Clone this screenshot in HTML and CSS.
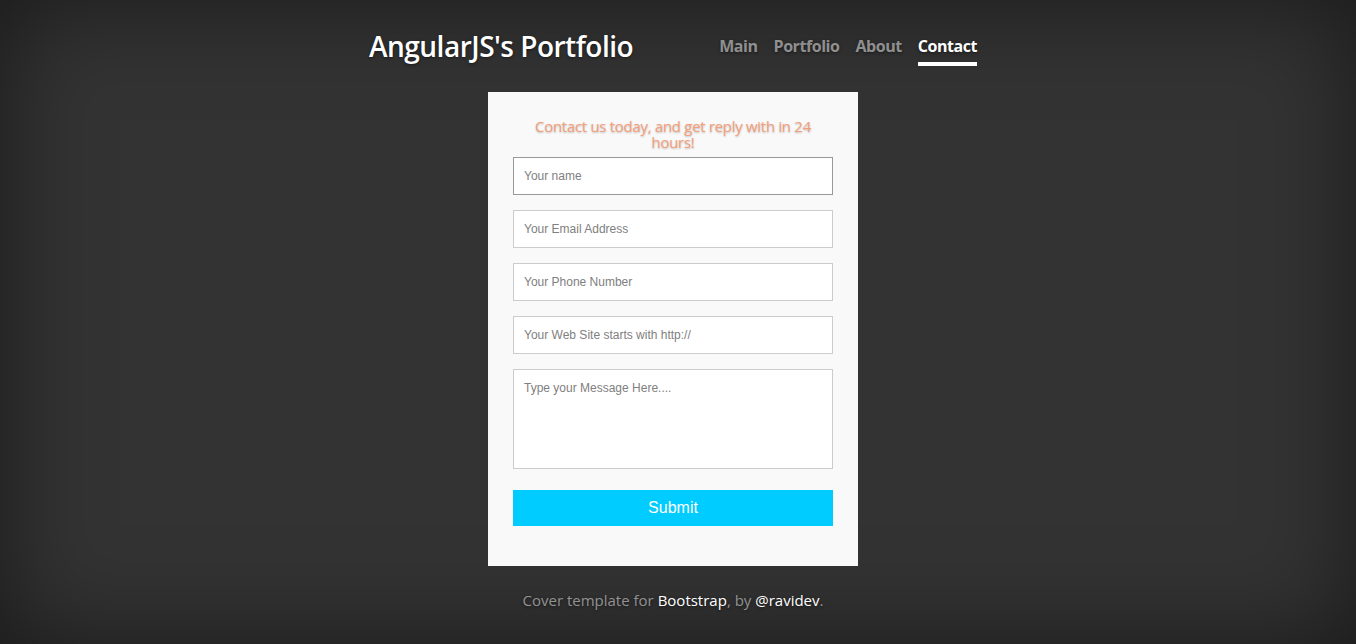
FILE: index.html
```html
<!DOCTYPE html>
<html lang="en">

<head>
    <meta charset="UTF-8">
    <meta name="viewport" content="width=device-width, initial-scale=1.0">
    <title>AngularJS's Portfolio</title>
    <link rel="stylesheet" href="styles.css">
</head>

<body>
    <div class="site-wrapper">
        <div class="cover-container">
            <div class="masthead">
                <h3 class="masthead-brand">AngularJS's Portfolio</h3>
                <ul class="masthead-nav">
                    <li><a href="#">Main</a></li>
                    <li><a href="#">Portfolio</a></li>
                    <li><a href="#">About</a></li>
                    <li class="active"><a href="#">Contact</a></li>
                </ul>
            </div>

            <div class="contact-card">
                <h4 class="contact-title">Contact us today, and get reply with in 24 hours!</h4>
                <form class="contact-form">
                    <input type="text" class="field field-focus" placeholder="Your name">
                    <input type="email" class="field" placeholder="Your Email Address">
                    <input type="tel" class="field" placeholder="Your Phone Number">
                    <input type="url" class="field" placeholder="Your Web Site starts with http://">
                    <textarea class="field field-message" placeholder="Type your Message Here...."></textarea>
                    <button type="button" class="submit">Submit</button>
                </form>
            </div>

            <div class="mastfoot">
                <p>Cover template for <a href="#">Bootstrap</a>, by <a href="#">@ravidev</a>.</p>
            </div>
        </div>
    </div>
</body>

</html>
```

FILE: styles.css
```css
html,
body {
    height: 100%;
}

body {
    margin: 0;
    background-color: #333;
    color: #fff;
    font-family: "Open Sans", "Noto Sans", sans-serif;
    text-shadow: 0 1px 3px rgba(0, 0, 0, 0.5);
    box-shadow: inset 0 0 100px rgba(0, 0, 0, 0.5);
}

a {
    color: #fff;
    text-decoration: none;
}

.site-wrapper {
    display: flex;
    justify-content: center;
    padding-right: 10px;
}

.cover-container {
    width: 608px;
    display: flex;
    flex-direction: column;
    align-items: center;
}

/* header */
.masthead {
    width: 100%;
    display: flex;
    justify-content: space-between;
    align-items: flex-start;
    padding-top: 28px;
    height: 92px;
    box-sizing: border-box;
}

.masthead-brand {
    margin: 0;
    font-size: 28px;
    font-weight: 600;
    line-height: 36px;
    letter-spacing: -0.5px;
}

.masthead-nav {
    list-style: none;
    margin: 0;
    padding: 0;
    display: flex;
    gap: 16px;
    padding-top: 8px;
}

.masthead-nav a {
    display: block;
    font-size: 16px;
    font-weight: 700;
    line-height: 20px;
    color: rgba(255, 255, 255, 0.5);
    border-bottom: 4px solid transparent;
    padding-bottom: 6px;
    letter-spacing: -0.45px;
}

.masthead-nav .active a {
    color: #fff;
    border-bottom-color: #fff;
}

/* contact form */
.contact-card {
    width: 370px;
    box-sizing: border-box;
    background-color: #f9f9f9;
    padding: 26px 25px 40px;
    text-shadow: none;
}

.contact-title {
    margin: 0 0 7px;
    text-align: center;
    color: #f4a07a;
    font-size: 15px;
    font-weight: 400;
    line-height: 16px;
    text-shadow: 0 1px 2px rgba(0, 0, 0, 0.25);
    letter-spacing: -0.3px;
}

.contact-form {
    display: flex;
    flex-direction: column;
    gap: 15px;
}

.field {
    display: block;
    width: 100%;
    height: 38px;
    box-sizing: border-box;
    margin: 0;
    padding: 0 10px;
    border: 1px solid #ccc;
    border-radius: 0;
    background-color: #fff;
    font-family: "Liberation Sans", Arial, sans-serif;
    font-size: 12px;
    color: #555;
    outline: none;
}

.field::placeholder {
    color: #808080;
}

.field-focus {
    border-color: #999;
}

.field-message {
    height: 100px;
    padding-top: 11px;
    resize: none;
}

.submit {
    margin-top: 6px;
    height: 36px;
    border: none;
    background-color: #00ccff;
    color: #fff;
    font-family: "Liberation Sans", Arial, sans-serif;
    font-size: 16px;
    cursor: pointer;
}

/* footer */
.mastfoot {
    color: rgba(255, 255, 255, 0.5);
    font-size: 15px;
    text-align: center;
}

.mastfoot p {
    margin: 24px 0 0;
}
```
